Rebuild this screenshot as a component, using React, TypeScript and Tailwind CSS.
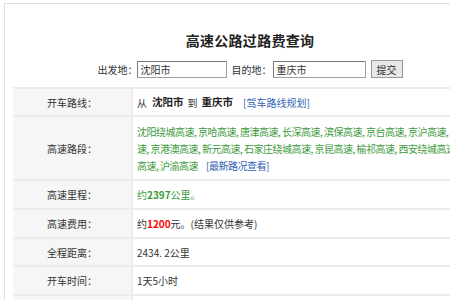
import React from "react";

const font = { fontFamily: '"Noto Sans CJK SC", "Liberation Sans", sans-serif' };

function Row({ label, h, children }: { label: string; h: string; children: React.ReactNode }) {
  return (
    <div className={`flex border-t-2 border-[#ececec] ${h}`}>
      <div className="w-[120px] shrink-0 bg-[#f6f6f6] border-r-2 border-[#ececec] flex items-center justify-center text-[10px] text-[#333]">
        {label}
      </div>
      <div className="flex-1 flex items-center pl-[4px] text-[10px] text-[#333] bg-white">{children}</div>
    </div>
  );
}

export default function App() {
  const green = "text-[#3c9a3c]";
  return (
    <div className="w-[450px] h-[300px] overflow-hidden bg-white" style={font}>
      <div className="ml-[4px] mt-[3px] w-[600px] h-[400px] border-l border-t border-[#dedede]">
        <div className="ml-[8px] w-[474px]">
          <div className="pt-[26px] h-[50px] text-center text-[14px] leading-[20px] font-bold text-[#222] tracking-[0.3px]">
            高速公路过路费查询
          </div>
          <div className="mt-[6px] flex items-center justify-center h-[18px] text-[10px] text-[#333] whitespace-nowrap">
            <span className="w-[39px] shrink-0">出发地：</span>
            <div className="w-[90px] shrink-0 h-[17px] border border-[#a0a0a0] border-t-[#7a7a7a] border-l-[#7a7a7a] bg-white flex items-center pl-[3px] text-[10px]">
              沈阳市
            </div>
            <span className="ml-[5px] w-[41px] shrink-0">目的地：</span>
            <div className="w-[93px] shrink-0 h-[17px] border border-[#a0a0a0] border-t-[#7a7a7a] border-l-[#7a7a7a] bg-white flex items-center pl-[3px] text-[10px]">
              重庆市
            </div>
            <div className="ml-[5px] w-[32px] shrink-0 h-[18px] border border-[#9a9a9a] bg-[#e8e8e8] flex items-center justify-center text-[10px] text-[#333]">
              提交
            </div>
          </div>
          <div className="mt-[9px]">
            <Row label="开车路线：" h="h-[28px]">
              <span>从</span>
              <span className="ml-[5px] font-bold text-[10.5px] text-[#222]">沈阳市</span>
              <span className="ml-[4px]">到</span>
              <span className="ml-[4px] font-bold text-[10.5px] text-[#222]">重庆市</span>
              <span className="ml-[10px] text-[#2f5fb3]">[驾车路线规划]</span>
            </Row>
            <Row label="高速路段：" h="h-[64px]">
              <div className={`${green} text-[10px] tracking-[-0.5px] leading-[17px] whitespace-nowrap`}>
                <div>沈阳绕城高速, 京哈高速, 唐津高速, 长深高速, 滨保高速, 京台高速, 京沪高速, 京石高</div>
                <div>速, 京港澳高速, 新元高速, 石家庄绕城高速, 京昆高速, 榆祁高速, 西安绕城高速, 包茂</div>
                <div>
                  高速, 沪渝高速<span className="ml-[8px] text-[#2f5fb3]">[最新路况查看]</span>
                </div>
              </div>
            </Row>
            <Row label="高速里程：" h="h-[29px]">
              <span className={green}>
                约<b>2397</b>公里。
              </span>
            </Row>
            <Row label="高速费用：" h="h-[29px]">
              <span>
                约<b className="text-[#ff0000]">1200</b>元。(结果仅供参考)
              </span>
            </Row>
            <Row label="全程距离：" h="h-[28px]">
              <span>2434. 2公里</span>
            </Row>
            <Row label="开车时间：" h="h-[29px]">
              <span>1天5小时</span>
            </Row>
            <Row label="" h="h-[29px]">
              <span></span>
            </Row>
          </div>
        </div>
      </div>
    </div>
  );
}
